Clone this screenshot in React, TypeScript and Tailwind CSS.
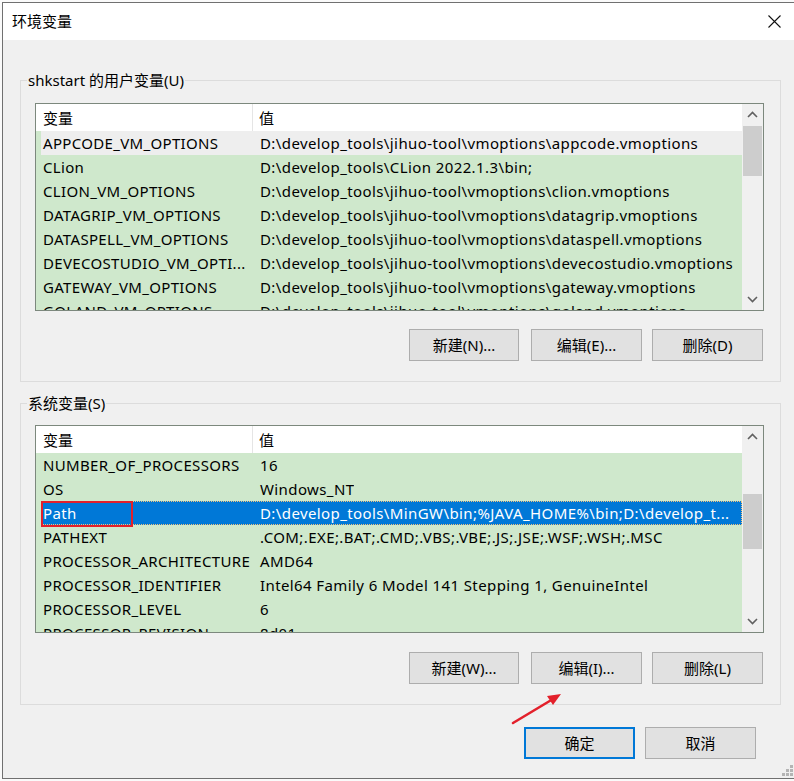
import React from "react";

type Row = {
  name: string;
  value: string;
  kind?: "hover" | "selected";
  marked?: boolean;
};

const userVars: Row[] = [
  { name: "APPCODE_VM_OPTIONS", value: "D:\\develop_tools\\jihuo-tool\\vmoptions\\appcode.vmoptions", kind: "hover" },
  { name: "CLion", value: "D:\\develop_tools\\CLion 2022.1.3\\bin;" },
  { name: "CLION_VM_OPTIONS", value: "D:\\develop_tools\\jihuo-tool\\vmoptions\\clion.vmoptions" },
  { name: "DATAGRIP_VM_OPTIONS", value: "D:\\develop_tools\\jihuo-tool\\vmoptions\\datagrip.vmoptions" },
  { name: "DATASPELL_VM_OPTIONS", value: "D:\\develop_tools\\jihuo-tool\\vmoptions\\dataspell.vmoptions" },
  { name: "DEVECOSTUDIO_VM_OPTI...", value: "D:\\develop_tools\\jihuo-tool\\vmoptions\\devecostudio.vmoptions" },
  { name: "GATEWAY_VM_OPTIONS", value: "D:\\develop_tools\\jihuo-tool\\vmoptions\\gateway.vmoptions" },
  { name: "GOLAND_VM_OPTIONS", value: "D:\\develop_tools\\jihuo-tool\\vmoptions\\goland.vmoptions" },
];

const sysVars: Row[] = [
  { name: "NUMBER_OF_PROCESSORS", value: "16" },
  { name: "OS", value: "Windows_NT" },
  { name: "Path", value: "D:\\develop_tools\\MinGW\\bin;%JAVA_HOME%\\bin;D:\\develop_t...", kind: "selected", marked: true },
  { name: "PATHEXT", value: ".COM;.EXE;.BAT;.CMD;.VBS;.VBE;.JS;.JSE;.WSF;.WSH;.MSC" },
  { name: "PROCESSOR_ARCHITECTURE", value: "AMD64" },
  { name: "PROCESSOR_IDENTIFIER", value: "Intel64 Family 6 Model 141 Stepping 1, GenuineIntel" },
  { name: "PROCESSOR_LEVEL", value: "6" },
  { name: "PROCESSOR_REVISION", value: "8d01" },
];

const Chevron = ({ up }: { up?: boolean }) => (
  <svg width="11" height="7" viewBox="0 0 11 7" className="block">
    <path
      d={up ? "M1 6 L5.5 1.5 L10 6" : "M1 1 L5.5 5.5 L10 1"}
      fill="none"
      stroke="#606060"
      strokeWidth="1.6"
    />
  </svg>
);

interface ListViewProps {
  rows: Row[];
  thumbTop: number;
  thumbHeight: number;
}

const ListView: React.FC<ListViewProps> = ({ rows, thumbTop, thumbHeight }) => {
  return (
    <div className="w-[729px] h-[208px] border border-[#7c887d] bg-[#cfe8cc] flex overflow-hidden">
      <div className="flex-1 flex flex-col overflow-hidden">
        {/* header */}
        <div className="h-[27px] shrink-0 bg-white flex items-center">
          <div className="w-[217px] h-full pl-[7px] pt-[1px] flex items-center border-r border-[#e5e5e5]">
            变量
          </div>
          <div className="pl-[6px] pt-[1px]">值</div>
        </div>
        {rows.map((row, rowIndex) => (
          <div
            key={rowIndex}
            className={
              row.kind === "selected"
                ? "relative ml-[5px] h-[24px] shrink-0 flex items-center bg-[#0078d7] text-white outline-1 outline-dotted outline-[#f3c27a] -outline-offset-1"
                : row.kind === "hover"
                ? "relative ml-[5px] h-[24px] shrink-0 flex items-center bg-[#eeeeee]"
                : "relative ml-[5px] h-[24px] shrink-0 flex items-center"
            }
          >
            <div className="w-[212px] shrink-0 pl-[2px] whitespace-nowrap overflow-hidden tracking-[0.33px]">
              {row.name}
            </div>
            <div className="pl-[7px] whitespace-nowrap overflow-hidden tracking-[0.4px]">
              {row.value}
            </div>
            {row.marked && (
              <div className="absolute left-0 top-0 w-[92px] h-[26px] border-2 border-[#e3202b]" />
            )}
          </div>
        ))}
      </div>
      {/* scrollbar */}
      <div className="w-[21px] shrink-0 bg-[#f0f0f0] flex flex-col">
        <div className="h-[21px] flex items-center justify-center">
          <Chevron up />
        </div>
        <div className="flex-1 relative">
          <div
            className="absolute left-[1px] w-[19px] bg-[#cdcdcd]"
            style={{ top: thumbTop, height: thumbHeight }}
          />
        </div>
        <div className="h-[21px] flex items-center justify-center">
          <Chevron />
        </div>
      </div>
    </div>
  );
};

const Button = ({
  label,
  width = 111,
  primary,
}: {
  label: string;
  width?: number;
  primary?: boolean;
}) => (
  <button
    className={
      primary
        ? "h-[32px] bg-[#e1e1e1] border-2 border-[#0078d7] flex items-center justify-center text-black"
        : "h-[32px] bg-[#e1e1e1] border border-[#adadad] flex items-center justify-center text-black"
    }
    style={{ width }}
  >
    {label}
  </button>
);

const GroupBox = ({
  label,
  listTop,
  children,
}: {
  label: string;
  listTop: number;
  children: React.ReactNode;
}) => (
  <div className="relative w-[761px] h-[302px] border border-[#dcdcdc]">
    <div className="absolute left-[6px] top-[-12px] px-[1px] bg-[#f0f0f0] leading-[22px]">
      {label}
    </div>
    <div className="pl-[14px]" style={{ paddingTop: listTop }}>
      {children}
    </div>
  </div>
);

export default function App() {
  return (
    <div className="w-[794px] h-[781px] overflow-hidden bg-[#fafafa] text-[15px] text-black font-['Noto_Sans','Noto_Sans_CJK_SC',sans-serif] relative">
      <div className="relative ml-[2px] mt-[2px] w-[794px] h-[777px] border border-[#707070] bg-[#f0f0f0] flex flex-col">
        {/* title bar */}
        <div className="h-[37px] shrink-0 bg-white flex items-center justify-between">
          <div className="pl-[9px] pb-[1px]">环境变量</div>
          <div className="w-[42px] h-full flex items-center justify-center">
            <svg width="13" height="13" viewBox="0 0 13 13">
              <path d="M0.5 0.5 L12.5 12.5 M12.5 0.5 L0.5 12.5" stroke="#111" strokeWidth="1.1" />
            </svg>
          </div>
        </div>

        {/* body */}
        <div className="pl-[17px] pt-[40px] flex flex-col">
          <GroupBox label="shkstart 的用户变量(U)" listTop={22}>
            <ListView rows={userVars} thumbTop={1} thumbHeight={50} />
            <div className="w-[728px] mt-[18px] flex justify-end">
              <Button label="新建(N)..." width={110} />
              <div className="w-[12px]" />
              <Button label="编辑(E)..." />
              <div className="w-[10px]" />
              <Button label="删除(D)" />
            </div>
          </GroupBox>

          <div className="mt-[21px]">
            <GroupBox label="系统变量(S)" listTop={21}>
              <ListView rows={sysVars} thumbTop={47} thumbHeight={55} />
              <div className="w-[728px] mt-[19px] flex justify-end">
                <Button label="新建(W)..." width={110} />
                <div className="w-[12px]" />
                <Button label="编辑(I)..." />
                <div className="w-[10px]" />
                <Button label="删除(L)" />
              </div>
            </GroupBox>
          </div>

          <div className="w-[761px] mt-[22px] pr-[25px] flex justify-end gap-[10px]">
            <Button label="确定" primary />
            <Button label="取消" />
          </div>
        </div>

        {/* resize grip */}
        <div className="absolute right-[2px] bottom-[2px] grid grid-cols-3 gap-[1px]">
          <div className="w-[3px] h-[3px]" />
          <div className="w-[3px] h-[3px]" />
          <div className="w-[3px] h-[3px] bg-[#b4b4b4]" />
          <div className="w-[3px] h-[3px]" />
          <div className="w-[3px] h-[3px] bg-[#b4b4b4]" />
          <div className="w-[3px] h-[3px] bg-[#b4b4b4]" />
          <div className="w-[3px] h-[3px] bg-[#b4b4b4]" />
          <div className="w-[3px] h-[3px] bg-[#b4b4b4]" />
          <div className="w-[3px] h-[3px] bg-[#b4b4b4]" />
        </div>
      </div>

      {/* red annotation arrow */}
      <svg className="absolute left-[505px] top-[686px]" width="64" height="44" viewBox="0 0 64 44">
        <line x1="8" y1="37" x2="48" y2="13" stroke="#e3202b" strokeWidth="2.6" strokeLinecap="round" />
        <polygon points="56,8 42,10 48,19" fill="#e3202b" />
      </svg>
    </div>
  );
}
